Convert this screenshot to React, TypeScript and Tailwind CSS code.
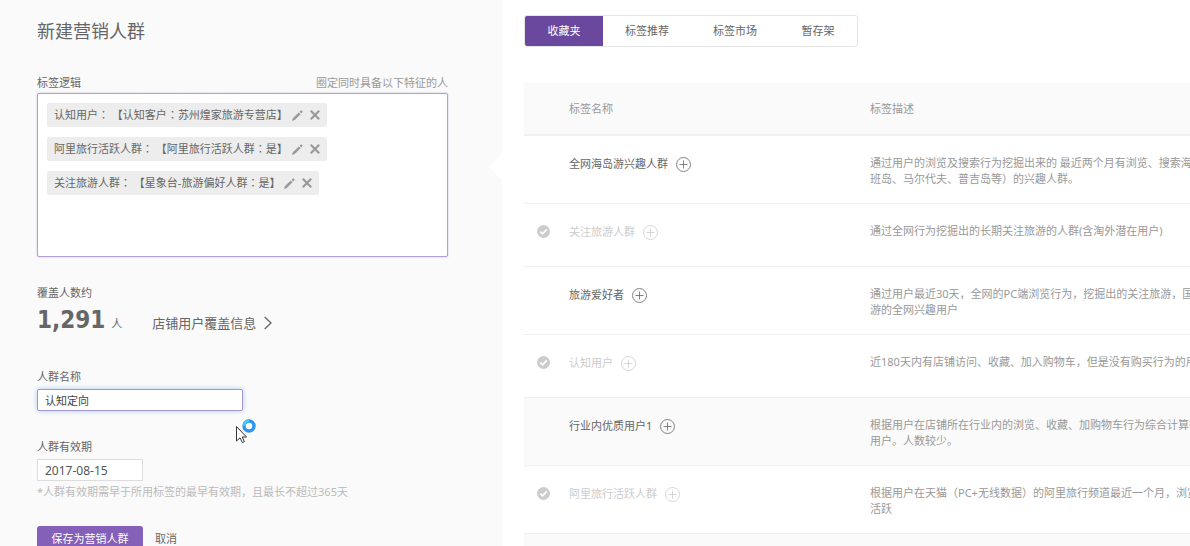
import { useState } from "react";

type Tag = { name: string; lines: string[]; used?: boolean; shaded?: boolean };

const tags: Tag[] = [
  {
    name: "全网海岛游兴趣人群",
    lines: ["通过用户的浏览及搜索行为挖掘出来的 最近两个月有浏览、搜索海岛", "班岛、马尔代夫、普吉岛等）的兴趣人群。"],
  },
  { name: "关注旅游人群", used: true, lines: ["通过全网行为挖掘出的长期关注旅游的人群(含淘外潜在用户)"] },
  { name: "旅游爱好者", lines: ["通过用户最近30天，全网的PC端浏览行为，挖掘出的关注旅游，国", "游的全网兴趣用户"] },
  { name: "认知用户", used: true, lines: ["近180天内有店铺访问、收藏、加入购物车，但是没有购买行为的用"] },
  {
    name: "行业内优质用户1",
    shaded: true,
    lines: ["根据用户在店铺所在行业内的浏览、收藏、加购物车行为综合计算得", "用户。人数较少。"],
  },
  {
    name: "阿里旅行活跃人群",
    used: true,
    lines: ["根据用户在天猫（PC+无线数据）的阿里旅行频道最近一个月，浏览", "活跃"],
  },
];

const rules = [
  "认知用户： 【认知客户：苏州煌家旅游专营店】",
  "阿里旅行活跃人群： 【阿里旅行活跃人群：是】",
  "关注旅游人群： 【星象台-旅游偏好人群：是】",
];

const tabs = ["收藏夹", "标签推荐", "标签市场", "暂存架"];

// Sets full-width colons in a face that centres them in their cell.
function RuleText({ text }: { text: string }) {
  return (
    <span className="whitespace-pre">
      {text.split(/(：)/).map((part, i) =>
        part === "：" ? (
          <span key={i} lang="zh-TW" className="font-['Noto_Sans_CJK_TC',sans-serif] leading-none">
            {part}
          </span>
        ) : (
          part
        ),
      )}
    </span>
  );
}

function PencilIcon() {
  return (
    <svg width="11" height="11" viewBox="0 0 10 10" fill="#999" aria-hidden="true">
      <path d="M0 10 .7 7.4 6.2 2.2 7.8 3.8 2.5 9.2zM6.9 1.6 8 .5Q8.4 .2 8.8 .5L9.5 1.2Q9.8 1.6 9.5 2L8.4 3.1z" />
    </svg>
  );
}

function CrossIcon() {
  return (
    <svg width="10" height="10" viewBox="0 0 10 10" fill="none" stroke="#999" strokeWidth="2.2" aria-hidden="true">
      <path d="M.8.8 9.2 9.2M9.2.8.8 9.2" />
    </svg>
  );
}

function PlusCircle() {
  return (
    <svg width="15" height="15" viewBox="0 0 15 15" fill="none" stroke="currentColor" strokeWidth=".8" aria-hidden="true">
      <circle cx="7.5" cy="7.5" r="7" />
      <path d="M3.5 7.5h8M7.5 3.5v8" />
    </svg>
  );
}

function CheckBadge() {
  return (
    <svg width="13" height="13" viewBox="0 0 13 13" role="img" aria-label="已添加">
      <circle cx="6.5" cy="6.5" r="6.5" fill="#ccc" />
      <path d="M3.3 6.6 5.6 8.8 9.8 4.4" fill="none" stroke="#fff" strokeWidth="1.7" />
    </svg>
  );
}

function Pointer() {
  return (
    <svg
      className="pointer-events-none absolute left-[235px] top-[418px]"
      width="22"
      height="26"
      viewBox="0 0 22 26"
      aria-hidden="true"
    >
      <circle cx="14" cy="8" r="5" fill="#fff" stroke="#2b95f0" strokeWidth="3.4" />
      <path d="M9 8A5 5 0 0 1 14 3" fill="none" stroke="#45c4fa" strokeWidth="3.4" />
      <path d="M1.5 8.5V23L5 19.8 7.4 24.6 9.4 23.6 7.2 19H11.5z" fill="#fff" stroke="#333" />
    </svg>
  );
}

export default function App() {
  const [active, setActive] = useState(0);
  const [name, setName] = useState("认知定向");
  const [date, setDate] = useState("2017-08-15");

  return (
    <div className="relative flex h-screen overflow-hidden bg-white font-['Noto_Sans','Noto_Sans_CJK_SC',sans-serif] text-[11px] leading-4 text-[#666]">
      <aside className="relative w-[502px] shrink-0 bg-[#fafafa] pt-[19px] pr-[54px] pl-[37px]">
        <h1 className="text-lg leading-6">新建营销人群</h1>

        <div className="mt-8 flex justify-between">
          <h2>标签逻辑</h2>
          <span className="text-[#999]">圈定同时具备以下特征的人</span>
        </div>
        <ul className="mt-[2px] flex min-h-[164px] flex-col items-start gap-[10px] rounded-xs border border-[#b39ddb] bg-white p-[9px] shadow-[0_0_2px_#c9bbe3]">
          {rules.map((rule) => (
            <li key={rule} className="flex h-6 items-center rounded-xs bg-[#ededed] px-[7px]">
              <RuleText text={rule} />
              <button type="button" aria-label="编辑" className="ml-1">
                <PencilIcon />
              </button>
              <button type="button" aria-label="删除" className="ml-[7px]">
                <CrossIcon />
              </button>
            </li>
          ))}
        </ul>

        <h2 className="mt-7">覆盖人数约</h2>
        <div className="mt-[3px] flex h-8 items-baseline">
          <strong className="font-['DejaVu_Sans_Condensed','DejaVu_Sans',sans-serif] text-2xl leading-8 font-bold">
            1,291
          </strong>
          <span className="ml-[6px]">人</span>
          <a href="#coverage" className="ml-[30px] flex items-center gap-2 text-[13px]">
            店铺用户覆盖信息
            <svg width="8" height="14" viewBox="0 0 8 14" fill="none" stroke="#666" strokeWidth="1.3" aria-hidden="true">
              <path d="M.7 1 7 7 .7 13" />
            </svg>
          </a>
        </div>

        <label htmlFor="crowd-name" className="mt-[33px] block">
          人群名称
        </label>
        <input
          id="crowd-name"
          value={name}
          onChange={(e) => setName(e.target.value)}
          className="mt-1 block h-[22px] w-[206px] rounded-xs border border-[#a695d3] bg-white px-[7px] text-[#444] shadow-[0_0_5px_#a9c8ea] outline-none"
        />

        <label htmlFor="crowd-date" className="mt-7 block">
          人群有效期
        </label>
        <input
          id="crowd-date"
          value={date}
          onChange={(e) => setDate(e.target.value)}
          className="mt-1 block h-[22px] w-[106px] border border-[#ddd] bg-white px-[7px] text-xs text-[#555] outline-none"
        />
        <p className="mt-[3px] text-[#bbb]">*人群有效期需早于所用标签的最早有效期，且最长不超过365天</p>

        <div className="mt-[26px] flex items-center gap-3">
          <button type="button" className="h-[26px] w-[106px] rounded-[3px] bg-[#8560b8] text-white">
            保存为营销人群
          </button>
          <button type="button">取消</button>
        </div>

        <svg className="absolute top-[154px] right-0" width="13" height="26" viewBox="0 0 13 26" aria-hidden="true">
          <path d="M13 0 0 13 13 26z" fill="#fff" />
        </svg>
      </aside>

      <main className="min-w-0 flex-1 pt-[15px] pl-[22px]">
        <div role="tablist" className="inline-flex h-8 overflow-hidden rounded-[3px] border border-[#e5e5e5]">
          {tabs.map((tab, i) => (
            <button
              key={tab}
              type="button"
              role="tab"
              aria-selected={i === active}
              onClick={() => setActive(i)}
              className={i === active ? "min-w-[78px] bg-[#6a489e] px-[22px] text-white" : "min-w-[78px] px-[22px]"}
            >
              {tab}
            </button>
          ))}
        </div>

        <table className="mt-9 w-full table-fixed text-left">
          <colgroup>
            <col className="w-[45px]" />
            <col className="w-[301px]" />
            <col />
          </colgroup>
          <thead>
            <tr className="h-[52px] border-b-2 border-[#f0f0f0] bg-[#fafafa] text-[#999]">
              <td />
              <th className="font-normal">标签名称</th>
              <th className="font-normal">标签描述</th>
            </tr>
          </thead>
          <tbody>
            {tags.map((tag) => (
              <tr key={tag.name} className={tag.shaded ? "border-b border-[#f0f0f0] bg-[#fafafa]" : "border-b border-[#f0f0f0]"}>
                <td className="h-[63px] pt-[21px] pl-[13px] align-top">{tag.used && <CheckBadge />}</td>
                <td className="pt-5 align-top">
                  <div className={tag.used ? "flex items-center gap-2 text-[#ccc]" : "flex items-center gap-2"}>
                    {tag.name}
                    <button type="button" aria-label="添加" disabled={tag.used}>
                      <PlusCircle />
                    </button>
                  </div>
                </td>
                <td className="pt-[19px] pb-4 align-top whitespace-nowrap text-[#999]">
                  {tag.lines.map((line) => (
                    <p key={line}>{line}</p>
                  ))}
                </td>
              </tr>
            ))}
            <tr className="h-[68px] bg-[#fafafa]">
              <td colSpan={3} />
            </tr>
          </tbody>
        </table>
      </main>
      <Pointer />
    </div>
  );
}
